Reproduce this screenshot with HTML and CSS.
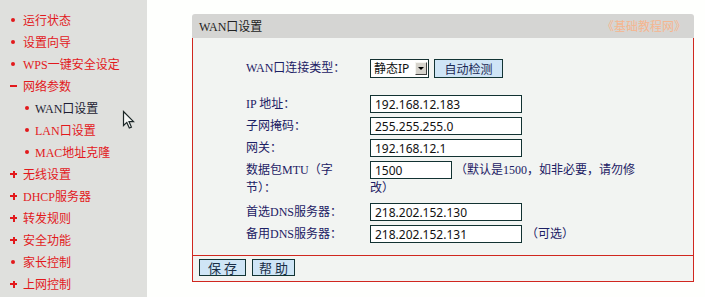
FILE: index.html
```html
<!DOCTYPE html>
<html lang="zh-CN">
<head>
<meta charset="utf-8">
<title>WAN口设置</title>
<link rel="stylesheet" href="styles.css">
</head>
<body>
<div class="layout">
  <nav class="sidebar">
    <ul class="menu">
      <li class="item"><span class="mk dot"></span><span class="txt">运行状态</span></li>
      <li class="item"><span class="mk dot"></span><span class="txt">设置向导</span></li>
      <li class="item"><span class="mk dot"></span><span class="txt">WPS一键安全设定</span></li>
      <li class="item"><span class="mk minus"></span><span class="txt">网络参数</span></li>
      <li class="item sub current"><span class="mk dot"></span><span class="txt">WAN口设置</span></li>
      <li class="item sub"><span class="mk dot"></span><span class="txt">LAN口设置</span></li>
      <li class="item sub"><span class="mk dot"></span><span class="txt">MAC地址克隆</span></li>
      <li class="item"><span class="mk plus"></span><span class="txt">无线设置</span></li>
      <li class="item"><span class="mk plus"></span><span class="txt">DHCP服务器</span></li>
      <li class="item"><span class="mk plus"></span><span class="txt">转发规则</span></li>
      <li class="item"><span class="mk plus"></span><span class="txt">安全功能</span></li>
      <li class="item"><span class="mk dot"></span><span class="txt">家长控制</span></li>
      <li class="item"><span class="mk plus"></span><span class="txt">上网控制</span></li>
    </ul>
  </nav>
  <main class="main">
    <section class="panel">
      <header class="panel-head">
        <span class="title">WAN口设置</span>
        <span class="brand">《基础教程网》</span>
      </header>
      <div class="panel-body">
        <div class="row row-type">
          <div class="label">WAN口连接类型：</div>
          <div class="value controls">
            <div class="select"><span class="select-text">静态IP</span><span class="select-arrow"></span></div>
            <button class="btn btn-detect" type="button">自动检测</button>
          </div>
        </div>
        <div class="row">
          <div class="label">IP 地址：</div>
          <div class="value"><input class="field" type="text" value="192.168.12.183"></div>
        </div>
        <div class="row">
          <div class="label">子网掩码：</div>
          <div class="value"><input class="field" type="text" value="255.255.255.0"></div>
        </div>
        <div class="row">
          <div class="label">网关：</div>
          <div class="value"><input class="field" type="text" value="192.168.12.1"></div>
        </div>
        <div class="row row-mtu">
          <div class="label">数据包MTU（字<br>节）：</div>
          <div class="value"><input class="field field-short" type="text" value="1500"><span class="note">（默认是1500，如非必要，请勿修<br>改）</span></div>
        </div>
        <div class="row">
          <div class="label">首选DNS服务器：</div>
          <div class="value"><input class="field" type="text" value="218.202.152.130"></div>
        </div>
        <div class="row">
          <div class="label">备用DNS服务器：</div>
          <div class="value"><input class="field" type="text" value="218.202.152.131"><span class="note note-opt">（可选）</span></div>
        </div>
      </div>
      <footer class="panel-foot">
        <button class="btn btn-foot" type="button">保 存</button>
        <button class="btn btn-foot btn-help" type="button">帮 助</button>
      </footer>
    </section>
  </main>
  <svg class="cursor" width="14" height="20" viewBox="0 0 14 20" aria-hidden="true">
    <path d="M1.5 1.5 L1.5 15.5 L4.8 12.4 L7.3 18 L9.4 17.1 L7 11.6 L11.5 11.6 Z" fill="#f4f6f4" stroke="#1b2626" stroke-width="1.2" stroke-linejoin="miter"/>
  </svg>
</div>
</body>
</html>
```

FILE: styles.css
```css
html, body {
  margin: 0;
  padding: 0;
}

body {
  background: #fefffd;
  font-family: "Liberation Serif", "Noto Sans CJK SC", serif;
  font-size: 12px;
  color: #1c2064;
}

.layout {
  display: flex;
  height: 297px;
  position: relative;
  overflow: hidden;
}

/* ---------- sidebar ---------- */
.sidebar {
  width: 147px;
  flex: none;
  background: #dfe0dd;
}

.menu {
  list-style: none;
  margin: 0;
  padding: 9px 0 0 0;
}

.item {
  display: flex;
  align-items: center;
  height: 22px;
  padding-left: 8px;
  color: #e2191c;
  font-size: 12px;
  white-space: nowrap;
}

.item.sub {
  padding-left: 22px;
}

.item.current {
  color: #1d1d33;
}

.mk {
  position: relative;
  width: 10px;
  height: 10px;
  flex: none;
  margin-right: 5px;
}

.item.sub .mk {
  margin-right: 3px;
}

.mk::before,
.mk::after {
  content: "";
  position: absolute;
  background: #e2191c;
}

.dot::before {
  width: 4px;
  height: 4px;
  border-radius: 50%;
  left: 3px;
  top: 3px;
}

.dot::after {
  display: none;
}

.minus::before {
  width: 7px;
  height: 2px;
  left: 2px;
  top: 4px;
}

.minus::after {
  display: none;
}

.plus::before {
  width: 7px;
  height: 2px;
  left: 2px;
  top: 4px;
}

.plus::after {
  width: 2px;
  height: 7px;
  left: 4.5px;
  top: 1.5px;
}

/* ---------- main ---------- */
.main {
  flex: 1;
  padding: 14px 0 0 45px;
}

.panel {
  width: 502px;
}

.panel-head {
  height: 24px;
  display: flex;
  align-items: center;
  justify-content: space-between;
  padding: 0 8px 0 7px;
  background: #d5d5d3;
  border-radius: 3px 3px 0 0;
}

.title {
  color: #222;
  font-size: 12px;
}

.brand {
  color: #f5b68f;
  font-size: 12px;
}

.panel-body {
  background: #f2f4f2;
  border-left: 1px solid #d0271f;
  border-right: 1px solid #d0271f;
  padding: 19px 0 10px 53px;
}

.row {
  display: flex;
  align-items: flex-start;
  padding: 2px 0;
}

.row-type {
  margin-bottom: 13px;
}

.row-mtu {
  padding-bottom: 4px;
}

.label {
  width: 124px;
  flex: none;
  line-height: 18px;
  white-space: nowrap;
}

.row-type .label {
  line-height: 19px;
}

.value {
  line-height: 18px;
  white-space: nowrap;
}

.controls {
  display: flex;
  gap: 5px;
}

.select {
  box-sizing: border-box;
  width: 59px;
  height: 19px;
  border: 1px solid #143030;
  background: #fff;
  display: flex;
  align-items: center;
  justify-content: space-between;
  padding: 0 1px 0 3px;
  font-family: "Noto Sans", "Noto Sans CJK SC", sans-serif;
  font-size: 12px;
  color: #111;
}

.select-arrow {
  position: relative;
  width: 12px;
  height: 13px;
  box-sizing: border-box;
  background: #d6d3cc;
  border-top: 1px solid #f4f4f0;
  border-left: 1px solid #f4f4f0;
  border-right: 1px solid #404040;
  border-bottom: 1px solid #404040;
}

.select-arrow::before {
  content: "";
  position: absolute;
  left: 2px;
  top: 4px;
  border-left: 3px solid transparent;
  border-right: 3px solid transparent;
  border-top: 3px solid #000;
}

.btn {
  box-sizing: border-box;
  margin: 0;
  border: 1px solid #123434;
  background: #cfe5f6;
  color: #1c2a55;
  font-family: "Noto Sans CJK SC", sans-serif;
  font-size: 12px;
  padding: 0;
  cursor: pointer;
}

.btn-detect {
  width: 69px;
  height: 19px;
  line-height: 17px;
}

.field {
  box-sizing: border-box;
  width: 152px;
  height: 18px;
  margin: 0;
  padding: 0 0 0 4px;
  border: 1px solid #123232;
  background: #fff;
  color: #111;
  font-family: "Noto Sans", sans-serif;
  font-size: 12px;
  vertical-align: top;
  outline: none;
}

.field-short {
  width: 82px;
}

.note {
  margin-left: 3px;
}

.note-opt {
  margin-left: 4px;
}

/* ---------- footer ---------- */
.panel-foot {
  display: flex;
  gap: 6px;
  background: #f2f4f2;
  border: 1px solid #d0271f;
  padding: 3px 0 5px 6px;
}

.btn-foot {
  width: 47px;
  height: 17px;
  line-height: 15px;
  font-size: 13px;
  color: #1a2e46;
}

.btn-help {
  width: 43px;
}

/* ---------- pointer overlay ---------- */
.cursor {
  position: absolute;
  left: 122px;
  top: 110px;
}
```
